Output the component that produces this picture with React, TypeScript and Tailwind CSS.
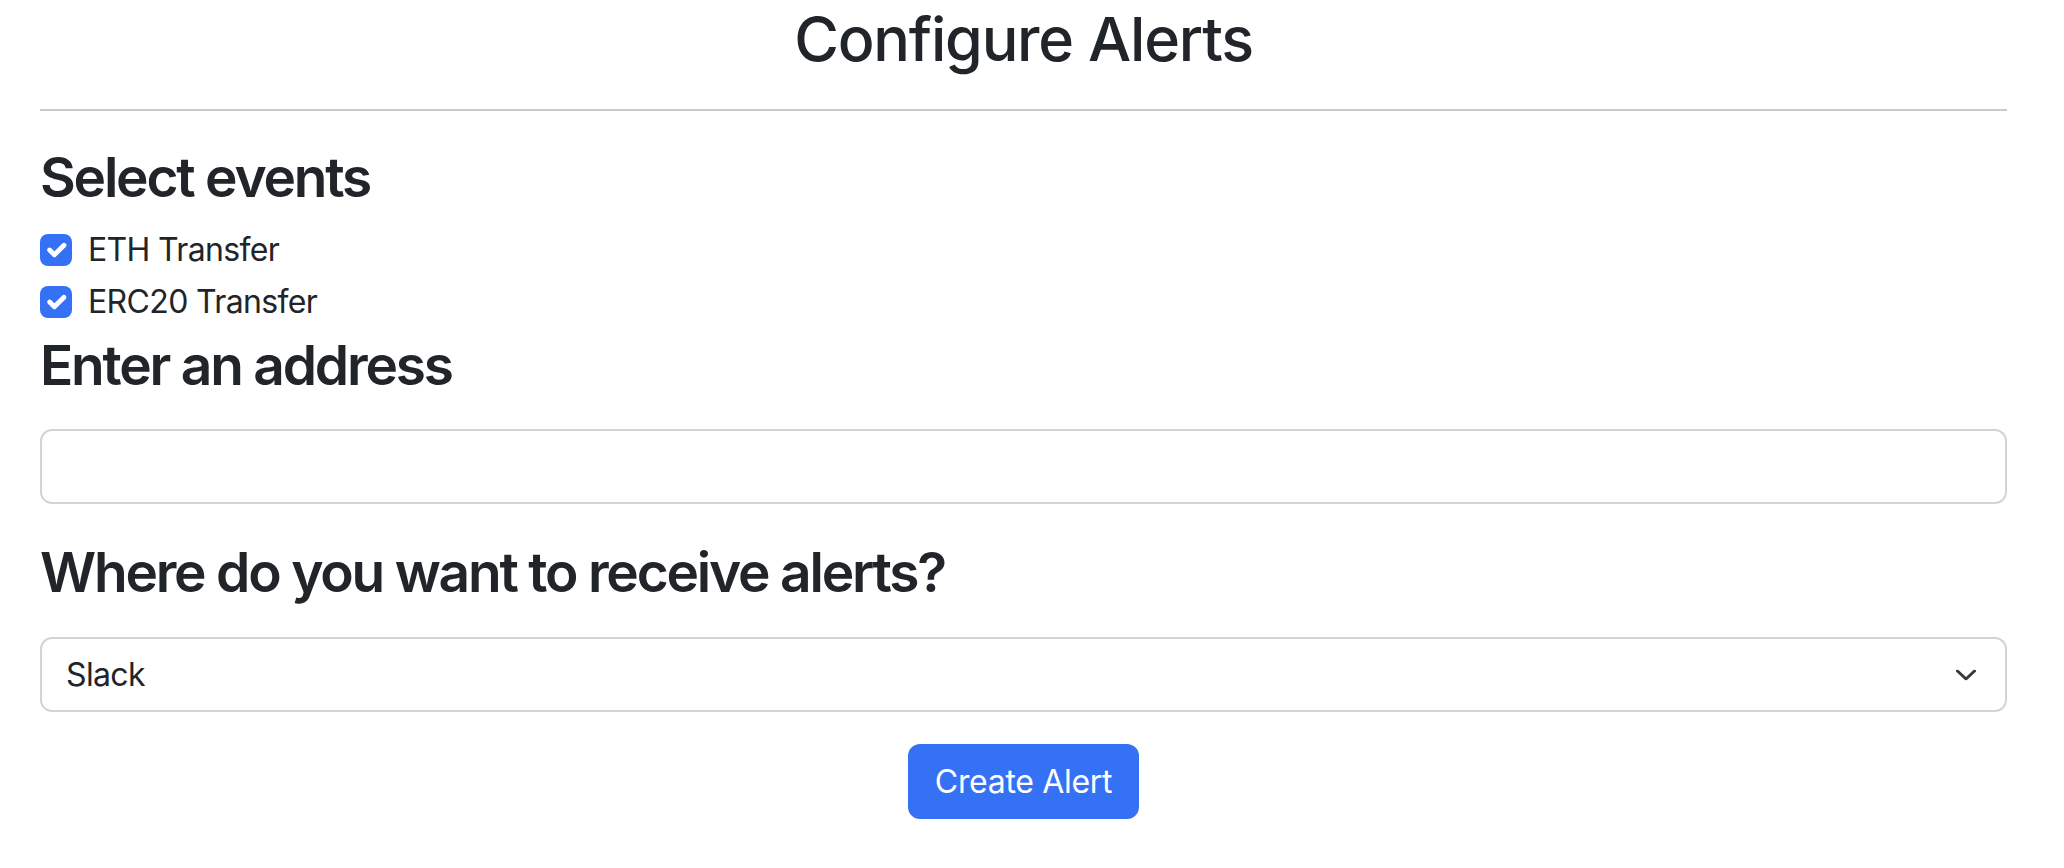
import { useState } from "react";

const events = [
  { id: "eth", label: "ETH Transfer" },
  { id: "erc20", label: "ERC20 Transfer" },
];

function Check() {
  return (
    <span className="mt-[8px] flex h-[32px] w-[32px] shrink-0 items-center justify-center rounded-[8px] bg-[#3571f5]">
      <svg viewBox="0 0 20 20" className="h-[32px] w-[32px]" fill="none">
        <path d="m6 10 3 3 6-6" stroke="#fff" strokeWidth="3" strokeLinecap="round" strokeLinejoin="round" />
      </svg>
    </span>
  );
}

export default function App() {
  const [address, setAddress] = useState("");
  const [channel, setChannel] = useState("slack");

  return (
    <div className="min-h-[868px] bg-white pl-[40px] pr-[57px] text-[#212529] [font-family:Inter,'Liberation_Sans',sans-serif]">
      <h2 className="mt-[3px] text-center text-[61px] font-medium leading-[73px] tracking-[-0.02em]">Configure Alerts</h2>
      <div className="mt-[33px] border-t-2 border-[#c8c9ca]" />

      {/* events */}
      <h3 className="mt-[33px] text-[55px] font-semibold leading-[66px] tracking-[-0.04em]">Select events</h3>
      <div className="mt-[16px] flex flex-col">
        {events.map((e) => (
          <label key={e.id} className="mb-[4px] flex items-start gap-[16px] text-[32px] leading-[48px] tracking-[-0.02em]">
            <Check />
            <span>{e.label}</span>
          </label>
        ))}
      </div>

      {/* address */}
      <h3 className="mt-[2px] text-[55px] font-semibold leading-[66px] tracking-[-0.04em]">Enter an address</h3>
      <input
        value={address}
        onChange={(e) => setAddress(e.target.value)}
        className="mt-[31px] block h-[75px] w-full rounded-[12px] border-2 border-[#d0d5da] px-[24px] text-[32px] outline-none"
      />

      {/* destination */}
      <h3 className="mt-[35px] text-[55px] font-semibold leading-[66px] tracking-[-0.04em]">
        Where do you want to receive alerts?
      </h3>
      <div className="relative mt-[32px]">
        <select
          value={channel}
          onChange={(e) => setChannel(e.target.value)}
          className="block h-[75px] w-full appearance-none rounded-[12px] border-2 border-[#d0d5da] bg-white pl-[24px] pr-[72px] text-[32px] tracking-[-0.02em] text-[#212529] outline-none"
        >
          <option value="slack">Slack</option>
          <option value="email">Email</option>
          <option value="discord">Discord</option>
        </select>
        <svg
          viewBox="0 0 20 11"
          className="pointer-events-none absolute right-[31px] top-1/2 h-[11px] w-[20px] -translate-y-1/2"
          fill="none"
        >
          <path d="M1.5 1.5 10 9.5l8.5-8" stroke="#343a40" strokeWidth="3" strokeLinecap="round" strokeLinejoin="round" />
        </svg>
      </div>

      <div className="mt-[32px] flex justify-center">
        <button className="h-[75px] rounded-[12px] bg-[#3571f5] px-[27px] text-[32px] tracking-[-0.01em] text-white">
          Create Alert
        </button>
      </div>
    </div>
  );
}
